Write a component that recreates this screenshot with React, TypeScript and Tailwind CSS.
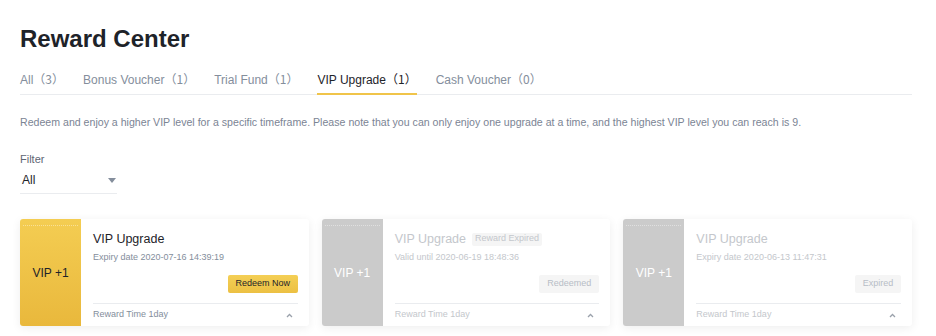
import React from "react";

const tabs = [
  { label: "All", count: 3 },
  { label: "Bonus Voucher", count: 1 },
  { label: "Trial Fund", count: 1 },
  { label: "VIP Upgrade", count: 1, active: true },
  { label: "Cash Voucher", count: 0 },
];

function ChevronUp() {
  return (
    <svg width="7" height="5" viewBox="0 0 7 5" fill="none">
      <path d="M1 4L3.5 1.5L6 4" stroke="#9aa1ab" strokeWidth="1.3" />
    </svg>
  );
}

type CardProps = {
  active?: boolean;
  dateLabel: string;
  badge?: string;
  button: string;
  buttonWidth: string;
};

function Card({ active, dateLabel, badge, button, buttonWidth }: CardProps) {
  return (
    <div className="flex h-[107px] flex-1 overflow-hidden rounded-[3px] bg-white shadow-[0_2px_10px_rgba(0,0,0,0.07)]">
      <div
        className={
          active
            ? "relative flex w-[61px] shrink-0 items-center justify-center bg-gradient-to-b from-[#f4cd52] to-[#e9b83c]"
            : "relative flex w-[61px] shrink-0 items-center justify-center bg-[#cbcbcb]"
        }
      >
        <div className="absolute left-[3px] right-[3px] top-[6px] border-t border-dotted border-white/40" />
        <span
          className={
            active
              ? "text-[12px] font-medium text-[#1e2329]"
              : "text-[12px] font-medium text-white"
          }
        >
          VIP +1
        </span>
      </div>
      <div className="flex min-w-0 flex-1 flex-col pl-[12px] pr-[11px] pt-[10px]">
        <div className="flex h-[20px] items-center gap-[6px]">
          <span
            className={
              active
                ? "text-[12.5px] font-medium text-[#1e2329]"
                : "text-[12.5px] font-medium text-[#c4c7cc]"
            }
          >
            VIP Upgrade
          </span>
          {badge && (
            <span className="flex h-[13px] items-center rounded-[2px] bg-[#f5f5f5] px-[3px] text-[9px] text-[#c4c7cc]">
              {badge}
            </span>
          )}
        </div>
        <div
          className={
            active
              ? "h-[16px] text-[9px] leading-[16px] text-[#848e9c]"
              : "h-[16px] text-[9px] leading-[16px] text-[#c4c7cc]"
          }
        >
          {dateLabel}
        </div>
        <div className="mt-[10px] flex justify-end">
          <div
            className={
              active
                ? "flex h-[18px] items-center justify-center rounded-[2px] bg-gradient-to-b from-[#f4cf55] to-[#ecc043] text-[9px] text-[#1e2329] " + buttonWidth
                : "flex h-[18px] items-center justify-center rounded-[2px] bg-[#f5f5f5] text-[9px] text-[#b7bdc6] " + buttonWidth
            }
          >
            {button}
          </div>
        </div>
        <div className="mt-[10px] flex h-[23px] items-center justify-between border-t border-[#eaecef] pr-[5px]">
          <span
            className={
              active
                ? "text-[9px] text-[#848e9c]"
                : "text-[9px] text-[#c4c7cc]"
            }
          >
            Reward Time 1day
          </span>
          <ChevronUp />
        </div>
      </div>
    </div>
  );
}

export default function App() {
  return (
    <div
      className="min-h-[336px] w-[936px] bg-white pl-[20px] pr-[24px] pt-[23px]"
      style={{ fontFamily: "'Liberation Sans', Arial, 'Noto Sans CJK SC', sans-serif" }}
    >
      <h1 className="text-[24px] font-bold leading-[32px] text-[#1e2329]">
        Reward Center
      </h1>
      <div className="mt-[14px] flex gap-[19px] border-b border-[#eaecef]">
        {tabs.map((t) => (
          <div
            key={t.label}
            className={
              t.active
                ? "-mb-px border-b-2 border-[#f0c44a] pb-[3px] text-[12px] leading-[20px] text-[#1e2329]"
                : "-mb-px border-b-2 border-transparent pb-[3px] text-[12px] leading-[20px] text-[#848e9c]"
            }
          >
            {t.label}
            <span style={{ fontFamily: "'Noto Sans CJK SC', sans-serif" }}>（{t.count}）</span>
          </div>
        ))}
      </div>
      <p className="mt-[18px] text-[10.6px] leading-[18px] text-[#7b8494]">
        Redeem and enjoy a higher VIP level for a specific timeframe. Please note that you can only enjoy one upgrade at a time, and the highest VIP level you can reach is 9.
      </p>
      <div className="mt-[20px] text-[11px] leading-[16px] text-[#5e6673]">Filter</div>
      <div className="flex h-[27px] w-[97px] items-center justify-between border-b border-[#eaecef] pl-[2px] pr-[1px]">
        <span className="text-[12px] text-[#1e2329]">All</span>
        <svg width="8" height="5" viewBox="0 0 8 5">
          <path d="M0 0H8L4 5Z" fill="#848e9c" />
        </svg>
      </div>
      <div className="mt-[25px] flex gap-[13px]">
        <Card active dateLabel="Expiry date 2020-07-16 14:39:19" button="Redeem Now" buttonWidth="w-[70px]" />
        <Card dateLabel="Valid until 2020-06-19 18:48:36" badge="Reward Expired" button="Redeemed" buttonWidth="w-[60px]" />
        <Card dateLabel="Expiry date 2020-06-13 11:47:31" button="Expired" buttonWidth="w-[46px]" />
      </div>
    </div>
  );
}
